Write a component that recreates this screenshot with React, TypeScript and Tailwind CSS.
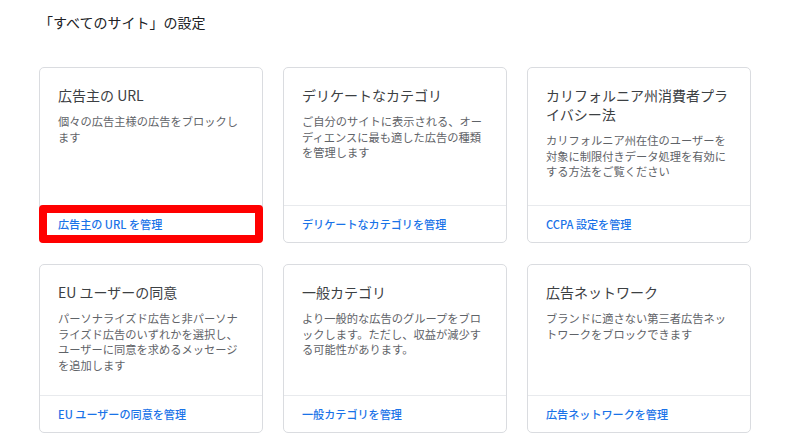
import React from 'react';

interface SettingCard {
  title: string;
  description: string;
  link: string;
  highlighted?: boolean;
}

const cards: SettingCard[] = [
  {
    title: "広告主の URL",
    description: "個々の広告主様の広告をブロックします",
    link: "広告主の URL を管理",
    highlighted: true,
  },
  {
    title: "デリケートなカテゴリ",
    description: "ご自分のサイトに表示される、オーディエンスに最も適した広告の種類を管理します",
    link: "デリケートなカテゴリを管理",
  },
  {
    title: "カリフォルニア州消費者プライバシー法",
    description: "カリフォルニア州在住のユーザーを対象に制限付きデータ処理を有効にする方法をご覧ください",
    link: "CCPA 設定を管理",
  },
  {
    title: "EU ユーザーの同意",
    description: "パーソナライズド広告と非パーソナライズド広告のいずれかを選択し、ユーザーに同意を求めるメッセージを追加します",
    link: "EU ユーザーの同意を管理",
  },
  {
    title: "一般カテゴリ",
    description: "より一般的な広告のグループをブロックします。ただし、収益が減少する可能性があります。",
    link: "一般カテゴリを管理",
  },
  {
    title: "広告ネットワーク",
    description: "ブランドに適さない第三者広告ネットワークをブロックできます",
    link: "広告ネットワークを管理",
  },
];

const App = () => {
  return (
    <div
      className="w-[790px] h-[445px] bg-white overflow-hidden"
      style={{ fontFamily: '"Noto Sans CJK JP", Roboto, "Noto Sans", sans-serif' }}
    >
      <h1 className="pt-[12px] px-[39px] text-[14px] leading-[20px] text-[#202124] font-normal">
        「すべてのサイト」の設定
      </h1>

      <div className="mt-[35px] px-[39px] grid grid-cols-3 grid-rows-[176px_169px] gap-x-[20px] gap-y-[21px]">
        {cards.map((card, i) => (
          <div
            key={i}
            className="relative flex flex-col rounded-[5px] border border-[#dadce0] bg-white"
          >
            <div className="flex-1 px-[18px] pt-[18px]">
              <h2 className="text-[14px] leading-[19px] text-[#3c4043] font-normal">{card.title}</h2>
              <p className="mt-[9px] text-[11.25px] leading-[15.7px] text-[#5f6368]">
                {card.description}
              </p>
            </div>
            <div className="relative h-[37px] border-t border-[#e8eaed] px-[18px] flex items-center">
              <span className="text-[11.1px] font-medium text-[#1a73e8]">{card.link}</span>
              {card.highlighted && (
                <div className="absolute -left-[1px] -right-[1px] -top-[1px] -bottom-[1px] rounded-[4px] border-[8px] border-[#ff0000]" />
              )}
            </div>
          </div>
        ))}
      </div>
    </div>
  );
};

export default App;
